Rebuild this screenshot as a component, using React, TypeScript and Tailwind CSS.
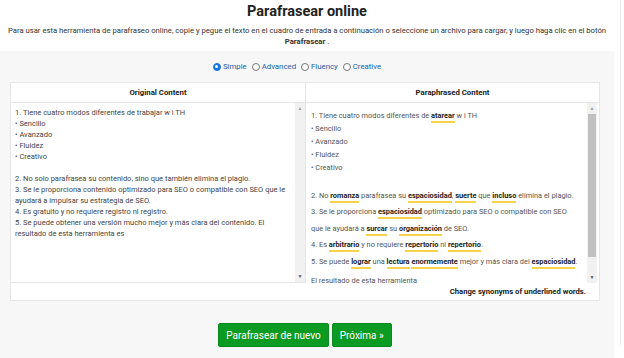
import React from "react";

const original = [
  "1. Tiene cuatro modos diferentes de trabajar w i TH",
  "• Sencillo",
  "• Avanzado",
  "• Fluidez",
  "• Creativo",
  "",
  "2. No solo parafrasea su contenido, sino que también elimina el plagio.",
  "3. Se le proporciona contenido optimizado para SEO o compatible con SEO que le ayudará a impulsar su estrategia de SEO.",
  "4. Es gratuito y no requiere registro ni registro.",
  "5. Se puede obtener una versión mucho mejor y más clara del contenido. El resultado de esta herramienta es",
];

function U({ children }: { children: React.ReactNode }) {
  return (
    <span className="font-bold text-[#222] border-b-2 border-[#f7d24a] pb-[1px]">
      {children}
    </span>
  );
}

function Radio({ label, checked }: { label: string; checked?: boolean }) {
  return (
    <label className="flex items-center gap-[2px]">
      <span
        className={
          checked
            ? "w-[8px] h-[8px] rounded-full bg-[#1a73e8] border border-[#1a73e8] flex items-center justify-center"
            : "w-[8px] h-[8px] rounded-full border border-[#777] bg-white"
        }
      >
        {checked && <span className="w-[3px] h-[3px] rounded-full bg-white" />}
      </span>
      <span className="text-[#1a5fa8]">{label}</span>
    </label>
  );
}

function ScrollArrows({ thumb }: { thumb?: boolean }) {
  return (
    <div className="w-[10px] bg-[#f1f1f1] flex flex-col items-center justify-between py-[3px] shrink-0">
      <span className="text-[5px] leading-none text-[#a0a0a0]">▲</span>
      {thumb && <div className="w-[8px] flex-1 bg-[#c1c1c1] mt-[3px] mb-[18px]" />}
      <span className="text-[5px] leading-none text-[#505050]">▼</span>
    </div>
  );
}

export default function App() {
  return (
    <div
      className="w-[624px] h-[358px] bg-white overflow-hidden text-[#444]"
      style={{ fontFamily: "Roboto, 'Liberation Sans', sans-serif" }}
    >
      <div className="w-[614px] text-center pt-[3px]">
        <h1 className="text-[14.5px] font-bold text-[#222] leading-[18px]">
          Parafrasear online
        </h1>
        <p className="text-[7.7px] leading-[11px] text-[#333] mt-[4px] whitespace-nowrap">
          Para usar esta herramienta de parafraseo online, copie y pegue el texto en el cuadro de entrada a
          continuación o seleccione un archivo para cargar, y luego haga clic en el botón
          <br />
          <b>Parafrasear</b> .
        </p>
      </div>

      <div className="flex">
        <div className="w-[614px] h-[309px] bg-[#f7f7f7] mt-[4px] pt-[10px]">
          <div className="flex justify-center gap-[5px] text-[7.8px] leading-[11px] ml-[-20px]">
            <Radio label="Simple" checked />
            <Radio label="Advanced" />
            <Radio label="Fluency" />
            <Radio label="Creative" />
          </div>

          <div className="mx-[10px] mt-[10px] w-[590px] bg-white border border-[#e6e6e6]">
            <div className="grid grid-cols-[295px_1fr] border-b border-[#e6e6e6] h-[20px] text-[7.8px] font-bold text-[#222]">
              <div className="flex items-center justify-center border-r border-[#e6e6e6]">
                Original Content
              </div>
              <div className="flex items-center justify-center">Paraphrased Content</div>
            </div>
            <div className="grid grid-cols-[295px_1fr] h-[180px] overflow-hidden">
              <div className="flex border-r border-[#e6e6e6] border-b pl-[1px] overflow-hidden">
                <div className="flex-1 px-[3px] pt-[4px] text-[7.5px] leading-[11px] text-[#444]">
                  {original.map((l, i) => (
                    <div key={i} className="min-h-[11px]">
                      {l}
                    </div>
                  ))}
                </div>
                <ScrollArrows />
              </div>
              <div className="flex pl-[5px] pr-[2px] overflow-hidden">
                <div className="flex-1 pt-[6px] text-[7.4px] text-[#555] overflow-hidden">
                  <div className="leading-[13px]">
                    <div>
                      1. Tiene cuatro modos diferentes de <U>atarear</U> w i TH
                    </div>
                    <div>• Sencillo</div>
                    <div>• Avanzado</div>
                    <div>• Fluidez</div>
                    <div>• Creativo</div>
                    <div className="h-[14px]" />
                  </div>
                  <div className="leading-[16.4px] whitespace-nowrap">
                    <div>
                      2. No <U>romanza</U> parafrasea su <U>espaciosidad</U>, <U>suerte</U> que{" "}
                      <U>incluso</U> elimina el plagio.
                    </div>
                    <div>
                      3. Se le proporciona <U>espaciosidad</U> optimizado para SEO o compatible con SEO
                    </div>
                    <div>
                      que le ayudará a <U>surcar</U> su <U>organización</U> de SEO.
                    </div>
                    <div>
                      4. Es <U>arbitrario</U> y no requiere <U>repertorio</U> ni <U>repertorio</U>.
                    </div>
                    <div>
                      5. Se puede <U>lograr</U> una <U>lectura</U> <U>enormemente</U> mejor y más clara del{" "}
                      <U>espaciosidad</U>.
                    </div>
                    <div className="mt-[3px]">El resultado de esta herramienta</div>
                  </div>
                </div>
                <ScrollArrows thumb />
              </div>
            </div>
            <div className="h-[17px] flex items-center justify-end pr-[13px] text-[7.7px] font-bold text-[#222]">
              Change synonyms of underlined words.
            </div>
          </div>

          <div className="flex justify-center gap-[3px] mt-[22px] text-[10px] text-white ml-[-4px]">
            <button className="h-[24px] px-[7px] bg-[#0c9b22] rounded-[2px] border border-[#0a8a1c]">
              Parafrasear de nuevo
            </button>
            <button className="h-[24px] px-[7px] bg-[#0c9b22] rounded-[2px] border border-[#0a8a1c]">
              Próxima »
            </button>
          </div>
        </div>
        <div className="w-[6px]" />
        <div className="w-[1px] bg-[#ececec] h-[358px] mt-[-60px]" />
      </div>
    </div>
  );
}
